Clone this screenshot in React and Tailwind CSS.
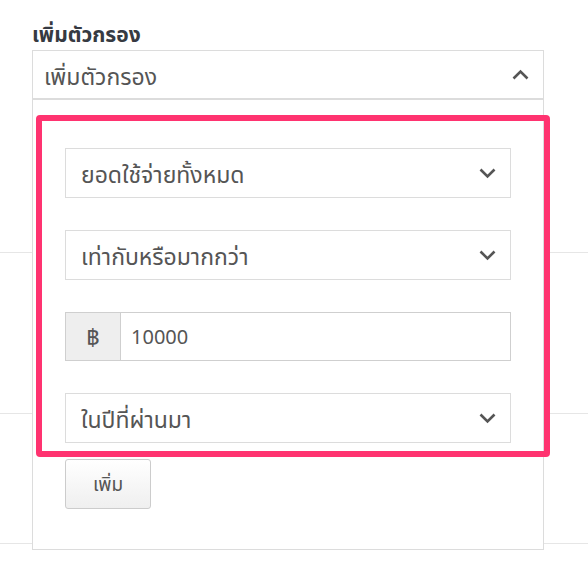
import React from "react";

function Chevron({ up = false }) {
  return (
    <svg width="17" height="11" viewBox="0 0 17 11" className="shrink-0">
      <polyline
        points={up ? "1.5,9.5 8.5,2.5 15.5,9.5" : "1.5,1.5 8.5,8.5 15.5,1.5"}
        fill="none"
        stroke="#555"
        strokeWidth="2.6"
      />
    </svg>
  );
}

function Select({ label }) {
  return (
    <div className="h-[50px] border border-[#dcdcdc] bg-white flex items-center justify-between pl-[15px] pr-[14px]">
      <span className="text-[23px] leading-[30px] pt-[2px] text-[#555]">{label}</span>
      <Chevron />
    </div>
  );
}

export default function App() {
  return (
    <div
      className="relative w-[588px] h-[588px] bg-white overflow-hidden"
      style={{ fontFamily: '"Noto Sans", "Noto Sans Thai", "Open Sans", sans-serif' }}
    >
      <div className="h-[50px] pl-8 pt-[20px]">
        <h1 className="text-[21px] leading-[28px] font-bold text-[#363a42]">เพิ่มตัวกรอง</h1>
      </div>
      <div className="h-[203px] border-b border-[#e6e6e6]" />
      <div className="h-[161px] border-b border-[#e6e6e6]" />
      <div className="h-[130px] border-b border-[#e6e6e6]" />

      <div className="absolute left-8 top-[50px] w-[512px] border border-[#dcdcdc] bg-white">
        <div className="h-[49px] flex items-center justify-between pl-[11px] pr-[14px] border-b-2 border-[#dcdcdc]">
          <span className="text-[23px] leading-[30px] pt-[3px] text-[#555]">เพิ่มตัวกรอง</span>
          <Chevron up />
        </div>
        <div className="px-8 pt-[48px] pb-[40px]">
          <div className="flex flex-col gap-8">
            <Select label="ยอดใช้จ่ายทั้งหมด" />
            <Select label="เท่ากับหรือมากกว่า" />
            <div className="h-[49px] flex border border-[#cfcfcf] bg-white">
              <div className="w-[55px] bg-[#eeeeee] border-r border-[#cfcfcf] flex items-center justify-center text-[23px] text-[#555]">
                ฿
              </div>
              <div className="flex items-center pl-[10px] text-[20px] text-[#555]">10000</div>
            </div>
            <Select label="ในปีที่ผ่านมา" />
          </div>
          <button className="mt-4 w-[86px] h-[50px] rounded-[3px] border border-[#cccccc] bg-gradient-to-b from-white to-[#efefef] text-[19px] text-[#555] flex items-center justify-center">
            เพิ่ม
          </button>
        </div>
      </div>

      <div className="absolute left-[36px] top-[115px] w-[514px] h-[342px] border-[6px] border-[#ff3370] rounded-[4px] pointer-events-none" />
    </div>
  );
}
